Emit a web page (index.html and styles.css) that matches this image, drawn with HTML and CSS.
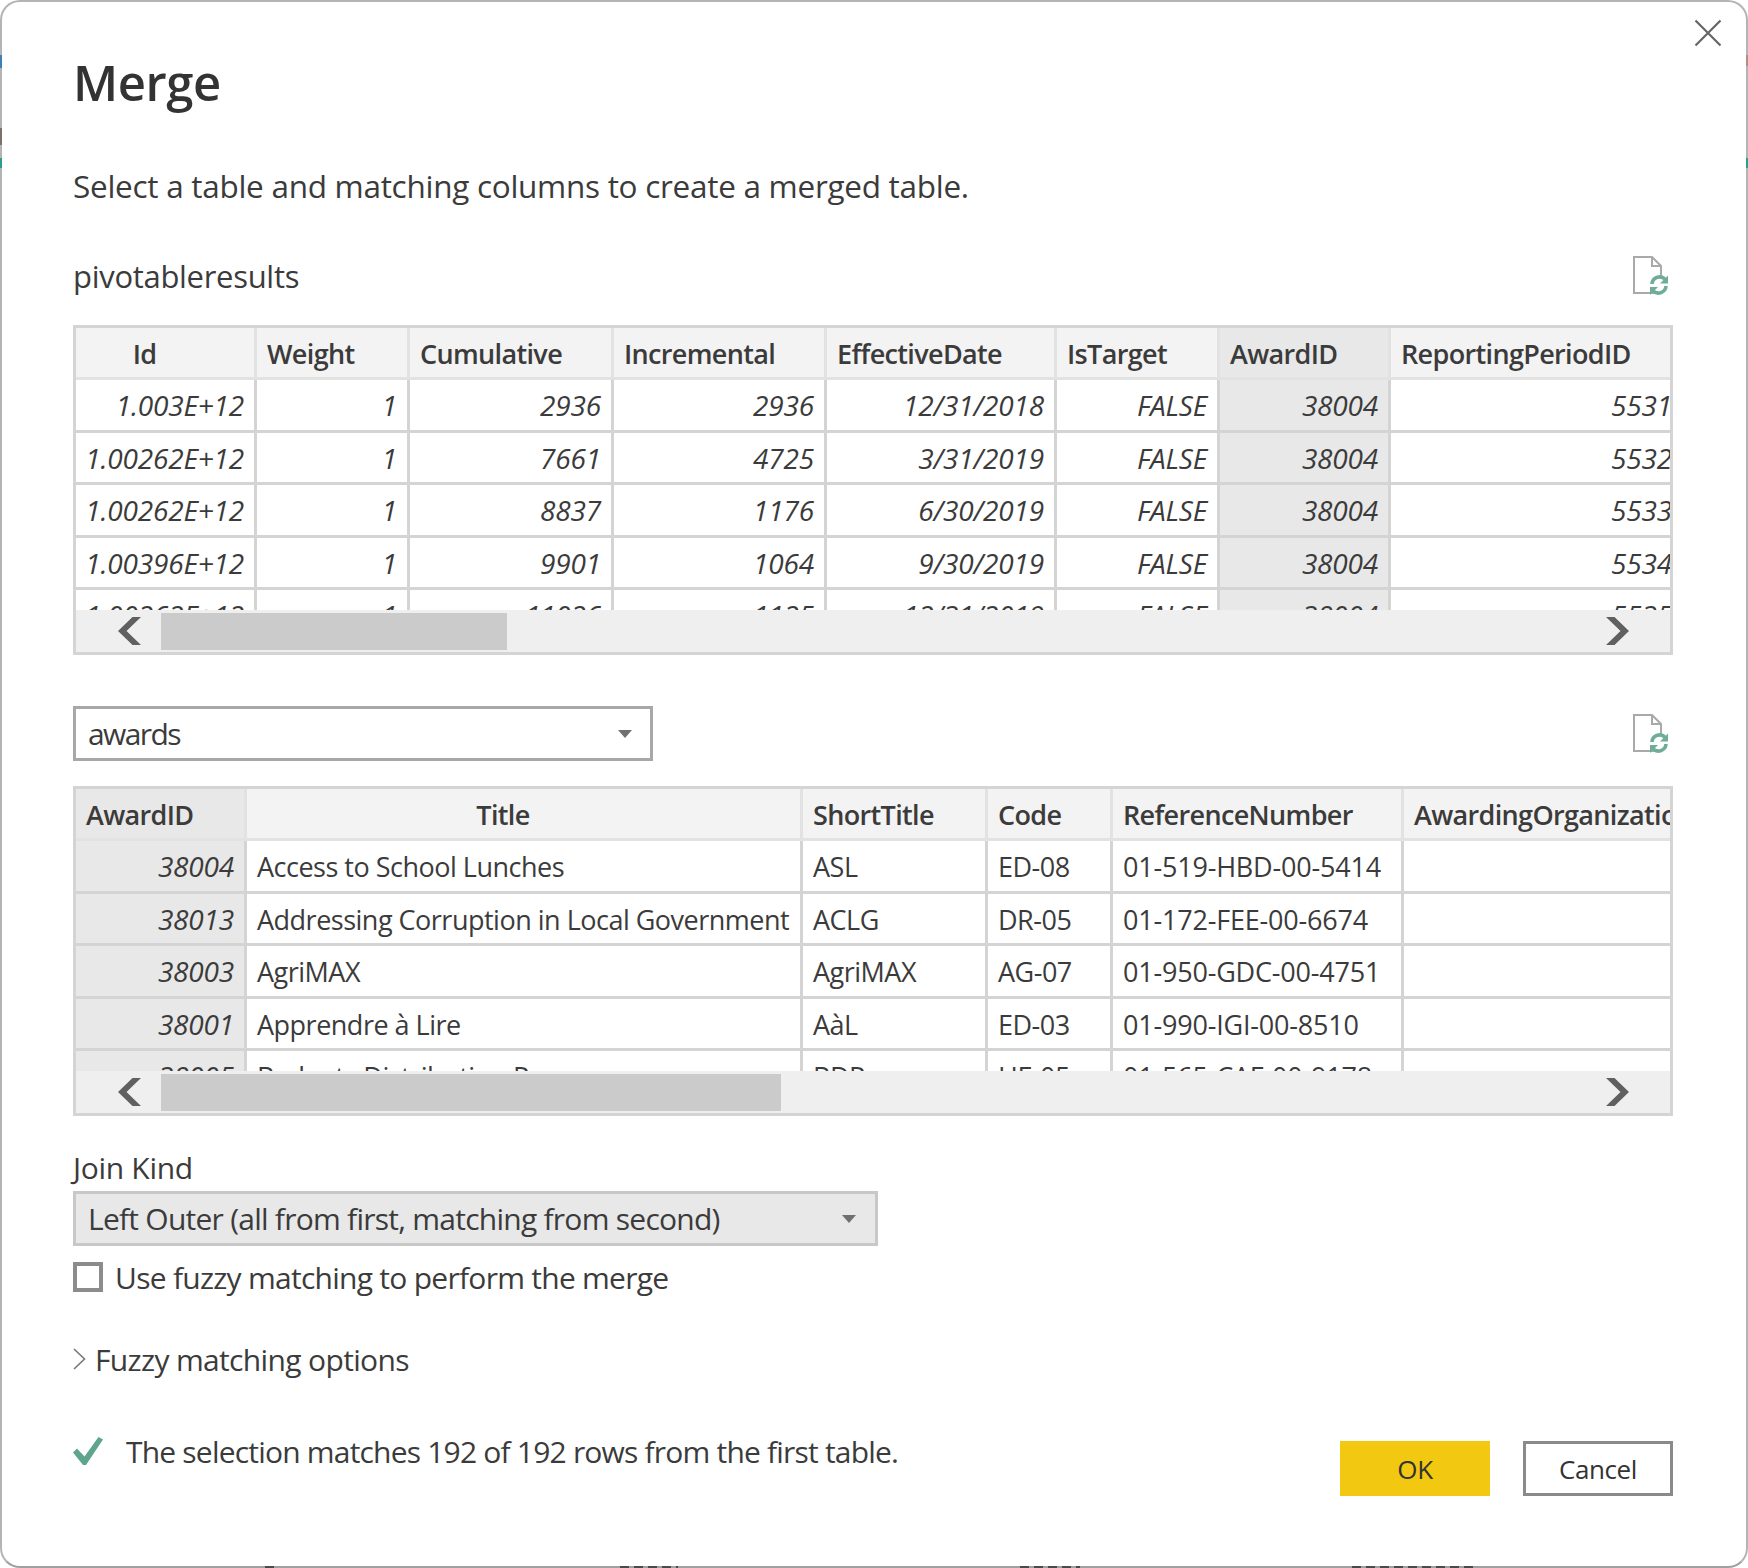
FILE: index.html
```html
<!DOCTYPE html>
<html lang="en">
<head>
<meta charset="utf-8">
<title>Merge</title>
<link rel="stylesheet" href="styles.css">
</head>
<body>
<div class="dialog">
  <svg class="close" width="28" height="28" viewBox="0 0 28 28"><path d="M1.5 1.5 26.5 26.5M26.5 1.5 1.5 26.5" fill="none" stroke="#666" stroke-width="2.2"/></svg>
  <h1 class="title">Merge</h1>
  <p class="intro">Select a table and matching columns to create a merged table.</p>

  <div class="tablehead first">
    <span class="tablename">pivotableresults</span>
    <svg class="fileicon" width="36" height="40" viewBox="0 0 36 40"><path d="M1 1H19L28 10V37H1Z M19 1V10H28" fill="#fff" stroke="#a9a9a9" stroke-width="2"/><circle cx="26" cy="29" r="10" fill="#fff"/><g fill="none" stroke="#6fad97" stroke-width="3.6"><path d="M19 28a7.500 7.500 0 0 1 13.500-4"/><path d="M33 30a7.500 7.500 0 0 1-13.500 4"/></g><path d="M35 19.500v8h-8zM17 39v-8h8z" fill="#6fad97"/></svg>
  </div>

  <div class="preview">
    <div class="viewport">
      <div class="grid grid-one">
        <div class="cell head center">Id</div>
        <div class="cell head">Weight</div>
        <div class="cell head">Cumulative</div>
        <div class="cell head">Incremental</div>
        <div class="cell head">EffectiveDate</div>
        <div class="cell head">IsTarget</div>
        <div class="cell head sel">AwardID</div>
        <div class="cell head last">ReportingPeriodID</div>

        <div class="cell num">1.003E+12</div><div class="cell num">1</div><div class="cell num">2936</div><div class="cell num">2936</div><div class="cell num">12/31/2018</div><div class="cell num">FALSE</div><div class="cell num sel">38004</div><div class="cell num last">5531</div>
        <div class="cell num">1.00262E+12</div><div class="cell num">1</div><div class="cell num">7661</div><div class="cell num">4725</div><div class="cell num">3/31/2019</div><div class="cell num">FALSE</div><div class="cell num sel">38004</div><div class="cell num last">5532</div>
        <div class="cell num">1.00262E+12</div><div class="cell num">1</div><div class="cell num">8837</div><div class="cell num">1176</div><div class="cell num">6/30/2019</div><div class="cell num">FALSE</div><div class="cell num sel">38004</div><div class="cell num last">5533</div>
        <div class="cell num">1.00396E+12</div><div class="cell num">1</div><div class="cell num">9901</div><div class="cell num">1064</div><div class="cell num">9/30/2019</div><div class="cell num">FALSE</div><div class="cell num sel">38004</div><div class="cell num last">5534</div>
        <div class="cell num">1.00262E+12</div><div class="cell num">1</div><div class="cell num">11026</div><div class="cell num">1125</div><div class="cell num">12/31/2019</div><div class="cell num">FALSE</div><div class="cell num sel">38004</div><div class="cell num last">5535</div>
      </div>
    </div>
    <div class="scrollbar">
      <svg class="arrow" width="24" height="28" viewBox="0 0 24 28"><path d="M23 0 8.5 14 23 28H14.500L0 14 14.500 0Z" fill="#606060"/></svg>
      <div class="track"><div class="thumb thumb-one"></div></div>
      <svg class="arrow" width="24" height="28" viewBox="0 0 24 28"><path d="M1 0 15.500 14 1 28H9.500L24 14 9.500 0Z" fill="#606060"/></svg>
    </div>
  </div>

  <div class="tablehead second">
    <div class="combo">
      <span class="combotext">awards</span>
      <span class="caret"></span>
    </div>
    <svg class="fileicon" width="36" height="40" viewBox="0 0 36 40"><path d="M1 1H19L28 10V37H1Z M19 1V10H28" fill="#fff" stroke="#a9a9a9" stroke-width="2"/><circle cx="26" cy="29" r="10" fill="#fff"/><g fill="none" stroke="#6fad97" stroke-width="3.6"><path d="M19 28a7.500 7.500 0 0 1 13.500-4"/><path d="M33 30a7.500 7.500 0 0 1-13.500 4"/></g><path d="M35 19.500v8h-8zM17 39v-8h8z" fill="#6fad97"/></svg>
  </div>

  <div class="preview">
    <div class="viewport">
      <div class="grid grid-two">
        <div class="cell head sel">AwardID</div>
        <div class="cell head center">Title</div>
        <div class="cell head">ShortTitle</div>
        <div class="cell head">Code</div>
        <div class="cell head">ReferenceNumber</div>
        <div class="cell head last">AwardingOrganization</div>

        <div class="cell num sel">38004</div><div class="cell">Access to School Lunches</div><div class="cell">ASL</div><div class="cell">ED-08</div><div class="cell code">01-519-HBD-00-5414</div><div class="cell last"></div>
        <div class="cell num sel">38013</div><div class="cell">Addressing Corruption in Local Government</div><div class="cell">ACLG</div><div class="cell">DR-05</div><div class="cell code">01-172-FEE-00-6674</div><div class="cell last"></div>
        <div class="cell num sel">38003</div><div class="cell">AgriMAX</div><div class="cell">AgriMAX</div><div class="cell">AG-07</div><div class="cell code">01-950-GDC-00-4751</div><div class="cell last"></div>
        <div class="cell num sel">38001</div><div class="cell">Apprendre à Lire</div><div class="cell">AàL</div><div class="cell">ED-03</div><div class="cell code">01-990-IGI-00-8510</div><div class="cell last"></div>
        <div class="cell num sel">38005</div><div class="cell">Bednets Distribution P</div><div class="cell">BDP</div><div class="cell">HE-05</div><div class="cell code">01-565-CAF-00-9178</div><div class="cell last"></div>
      </div>
    </div>
    <div class="scrollbar">
      <svg class="arrow" width="24" height="28" viewBox="0 0 24 28"><path d="M23 0 8.5 14 23 28H14.500L0 14 14.500 0Z" fill="#606060"/></svg>
      <div class="track"><div class="thumb thumb-two"></div></div>
      <svg class="arrow" width="24" height="28" viewBox="0 0 24 28"><path d="M1 0 15.500 14 1 28H9.500L24 14 9.500 0Z" fill="#606060"/></svg>
    </div>
  </div>

  <div class="joinlabel">Join Kind</div>
  <div class="joinkind">
    <span>Left Outer (all from first, matching from second)</span>
    <span class="caret"></span>
  </div>
  <label class="fuzzy"><span class="checkbox"></span><span>Use fuzzy matching to perform the merge</span></label>
  <div class="options">
    <svg width="13" height="22" viewBox="0 0 13 22"><path d="M1 1 11.500 11 1 21" fill="none" stroke="#777" stroke-width="1.600"/></svg>
    <span>Fuzzy matching options</span>
  </div>
  <div class="footer">
    <div class="status">
      <svg width="30" height="28" viewBox="0 0 30 28"><path d="M0 15.500 4 11.500 11.500 19.500 25.500 0 30 2.500 13 28H10Z" fill="#5fa58e"/></svg>
      <span>The selection matches 192 of 192 rows from the first table.</span>
    </div>
    <div class="buttons">
      <button class="btn ok" type="button">OK</button>
      <button class="btn cancel" type="button">Cancel</button>
    </div>
  </div>
</div>
<span class="speck speck-blue"></span>
<span class="speck speck-brown"></span>
<span class="speck speck-teal"></span>
<span class="speck speck-teal-right"></span>
<span class="speck speck-red-right"></span>
<span class="speck speck-under under-a"></span>
<span class="speck speck-under under-b"></span>
<span class="speck speck-under under-c"></span>
<span class="speck speck-under under-d"></span>
</body>
</html>
```
FILE: styles.css
```css
* { box-sizing: border-box; }
html, body { margin: 0; height: 100%; }
body {
  position: relative;
  width: 1748px;
  height: 1568px;
  overflow: hidden;
  background: #fff;
  font-family: "Open Sans", "Noto Sans", sans-serif;
  color: #3b3b3b;
}
.dialog {
  position: relative;
  width: 1748px;
  height: 1568px;
  background: #fff;
  border: 2px solid #b4b4b4;
  border-bottom-color: #a0a0a0;
  border-radius: 20px;
  padding: 0 73px 0 71px;
  display: flex;
  flex-direction: column;
}
.close { position: absolute; top: 17px; right: 24px; }
.title {
  margin: 45px 0 0;
  font-size: 49px;
  line-height: 70px;
  font-weight: 600;
  color: #333;
  letter-spacing: -0.4px;
}
.intro {
  margin: 47px 0 0;
  font-size: 31.500px;
  line-height: 44px;
  letter-spacing: -0.28px;
}
.tablehead {
  display: flex;
  align-items: center;
  justify-content: space-between;
  padding-right: 4px;
}
.tablehead.first { margin-top: 46px; height: 44px; margin-bottom: 27px; }
.tablehead.second { margin-top: 51px; height: 55px; margin-bottom: 25px; }
.tablename { font-size: 31px; letter-spacing: -0.3px; line-height: 44px; }
.fileicon { flex: none; }
.preview {
  border: 3px solid #d4d4d4;
  width: 1600px;
  height: 330px;
  display: flex;
  flex-direction: column;
}
.viewport { height: 282px; overflow: hidden; flex: none; }
.grid {
  display: grid;
  grid-template-rows: 52px repeat(5, 52.500px);
}
.grid-one { grid-template-columns: 181px 153px 204px 213px 230px 163px 171px 281px; }
.grid-two { grid-template-columns: 171px 556px 185px 125px 291px 266px; }
.cell {
  font-size: 27px;
  line-height: 45px;
  padding: 3px 10px 0 10px;
  border-right: 3px solid #d4d4d4;
  border-bottom: 3px solid #d4d4d4;
  white-space: nowrap;
  overflow: hidden;
  letter-spacing: -0.5px;
}
.head {
  background: #f3f3f3;
  font-weight: 600;
  border-color: #e2e2e2;
  letter-spacing: -0.65px;
  line-height: 47px;
  padding-top: 2px;
}
.center { text-align: center; padding-right: 51px; }
.num {
  text-align: right;
  font-style: italic;
  font-size: 28px;
  letter-spacing: -0.2px;
  padding-left: 2px;
}
.code { letter-spacing: -0.2px; }
.last { padding-right: 0; border-right: 0; }
.sel { background: #e8e8e8; }
.scrollbar {
  flex: 1;
  background: #efefef;
  display: flex;
  align-items: center;
  padding: 0 41px 0 42px;
}
.arrow { flex: none; }
.track { flex: 1; height: 37px; padding-left: 19px; }
.thumb { height: 100%; background: #cbcbcb; }
.thumb-one { width: 346px; }
.thumb-two { width: 620px; }
.combo {
  width: 580px;
  height: 55px;
  border: 3px solid #a8a8a8;
  display: flex;
  align-items: center;
  justify-content: space-between;
  padding: 0 18px 0 12px;
  font-size: 30px;
}
.combotext { letter-spacing: -1.600px; }
.caret {
  width: 0;
  height: 0;
  border-left: 7px solid transparent;
  border-right: 7px solid transparent;
  border-top: 8px solid #707070;
  flex: none;
}
.joinlabel {
  margin-top: 30px;
  font-size: 30px;
  line-height: 44px;
  letter-spacing: -0.3px;
}
.joinkind {
  margin-top: 1px;
  width: 805px;
  height: 55px;
  border: 3px solid #c8c8c8;
  background: #e8e8e8;
  display: flex;
  align-items: center;
  justify-content: space-between;
  padding: 0 19px 0 12px;
  font-size: 30px;
  letter-spacing: -0.75px;
}
.fuzzy {
  margin-top: 15px;
  display: flex;
  align-items: center;
  gap: 12px;
  height: 32px;
  font-size: 30px;
  letter-spacing: -0.73px;
}
.checkbox {
  width: 30px;
  height: 30px;
  border: 4px solid #8c8c8c;
  background: #fff;
  flex: none;
}
.options {
  margin-top: 44px;
  height: 44px;
  display: flex;
  align-items: center;
  gap: 9px;
  font-size: 30px;
  letter-spacing: -0.65px;
}
.footer {
  margin-top: 48px;
  display: flex;
  justify-content: space-between;
  align-items: flex-start;
}
.status {
  display: flex;
  align-items: center;
  gap: 23px;
  font-size: 30px;
  letter-spacing: -0.8px;
  height: 44px;
}
.buttons {
  display: flex;
  gap: 33px;
  margin-top: 12px;
}
.btn {
  width: 150px;
  height: 55px;
  font: inherit;
  font-size: 26px;
  letter-spacing: -0.4px;
  color: #333;
  padding: 0;
  border-radius: 0;
}
.ok { background: #f2c811; border: 0; }
.cancel { background: #fff; border: 3px solid #8a8a8a; }

/* slivers of the window behind the dialog, showing through its edge */
.speck { position: absolute; display: block; }
.speck-blue { left: 0; top: 55px; width: 2px; height: 13px; background: #3f7fb5; }
.speck-brown { left: 0; top: 128px; width: 2px; height: 17px; background: #7d7068; }
.speck-teal { left: 0; top: 158px; width: 2px; height: 10px; background: #2c9c90; }
.speck-teal-right { right: 0; top: 158px; width: 2px; height: 10px; background: #2c9c90; }
.speck-red-right { right: 0; top: 55px; width: 2px; height: 11px; background: #b98a8a; }
.speck-under { bottom: 0; height: 2px; background: repeating-linear-gradient(90deg, #4a4a4a 0 9px, #a0a0a0 9px 14px); }
.under-a { left: 265px; width: 11px; }
.under-b { left: 620px; width: 58px; }
.under-c { left: 1020px; width: 60px; }
.under-d { left: 1352px; width: 125px; }
```
